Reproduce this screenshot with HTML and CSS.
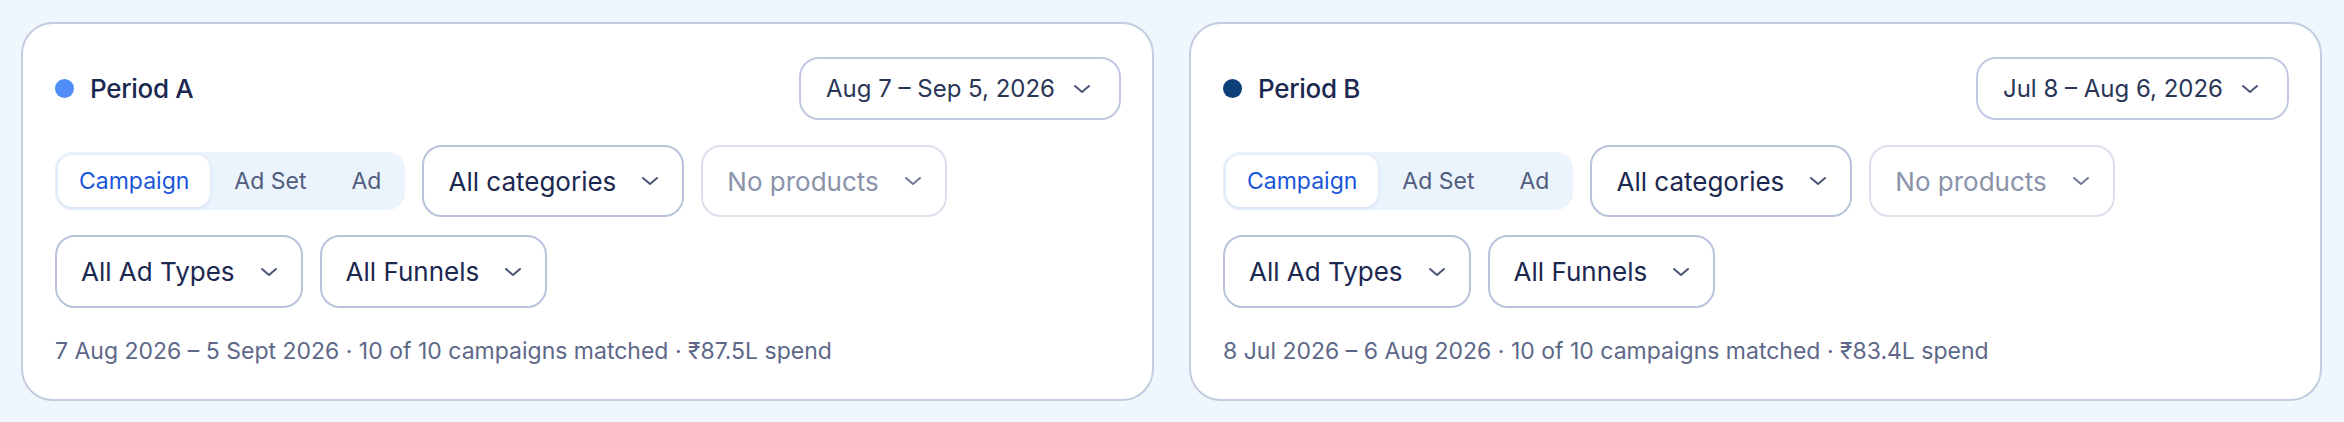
FILE: index.html
```html
<!DOCTYPE html>
<html lang="en">
<head>
<meta charset="utf-8">
<title>Period comparison</title>
<link rel="stylesheet" href="styles.css">
</head>
<body>
<div class="page">
  <section class="card">
    <div class="card-head">
      <div class="title"><span class="dot dot-a"></span><span>Period A</span></div>
      <button class="date-btn">Aug 7 – Sep 5, 2026<svg class="chev" viewBox="0 0 18 10"><path d="M2 2l7 6 7-6"/></svg></button>
    </div>
    <div class="row">
      <div class="seg">
        <span class="seg-item active">Campaign</span>
        <span class="seg-item">Ad Set</span>
        <span class="seg-item">Ad</span>
      </div>
      <button class="select">All categories<svg class="chev" viewBox="0 0 18 10"><path d="M2 2l7 6 7-6"/></svg></button>
      <button class="select disabled">No products<svg class="chev" viewBox="0 0 18 10"><path d="M2 2l7 6 7-6"/></svg></button>
    </div>
    <div class="row">
      <button class="select">All Ad Types<svg class="chev" viewBox="0 0 18 10"><path d="M2 2l7 6 7-6"/></svg></button>
      <button class="select">All Funnels<svg class="chev" viewBox="0 0 18 10"><path d="M2 2l7 6 7-6"/></svg></button>
    </div>
    <p class="summary">7 Aug 2026 – 5 Sept 2026 · 10 of 10 campaigns matched · ₹87.5L spend</p>
  </section>
  <section class="card">
    <div class="card-head">
      <div class="title"><span class="dot dot-b"></span><span>Period B</span></div>
      <button class="date-btn">Jul 8 – Aug 6, 2026<svg class="chev" viewBox="0 0 18 10"><path d="M2 2l7 6 7-6"/></svg></button>
    </div>
    <div class="row">
      <div class="seg">
        <span class="seg-item active">Campaign</span>
        <span class="seg-item">Ad Set</span>
        <span class="seg-item">Ad</span>
      </div>
      <button class="select">All categories<svg class="chev" viewBox="0 0 18 10"><path d="M2 2l7 6 7-6"/></svg></button>
      <button class="select disabled">No products<svg class="chev" viewBox="0 0 18 10"><path d="M2 2l7 6 7-6"/></svg></button>
    </div>
    <div class="row">
      <button class="select">All Ad Types<svg class="chev" viewBox="0 0 18 10"><path d="M2 2l7 6 7-6"/></svg></button>
      <button class="select">All Funnels<svg class="chev" viewBox="0 0 18 10"><path d="M2 2l7 6 7-6"/></svg></button>
    </div>
    <p class="summary">8 Jul 2026 – 6 Aug 2026 · 10 of 10 campaigns matched · ₹83.4L spend</p>
  </section>
</div>
</body>
</html>
```

FILE: styles.css
```css
* { box-sizing: border-box; }
html, body {
  margin: 0;
  padding: 0;
  background: #f0f6fe;
  font-family: Inter, "Noto Sans", "Liberation Sans", sans-serif;
  color: #1b2850;
}
.page {
  display: grid;
  grid-template-columns: 1fr 1fr;
  gap: 35px;
  padding: 22px 22px 21px 21px;
  height: 422px;
}
.card {
  background: #ffffff;
  border: 2px solid #c3cde2;
  border-radius: 32px;
  padding: 33px 31px 0 32px;
  display: flex;
  flex-direction: column;
}
.card-head {
  display: flex;
  justify-content: space-between;
  align-items: center;
  height: 63px;
}
.title {
  display: flex;
  align-items: center;
  gap: 16px;
  font-size: 26px;
  font-weight: 500;
  letter-spacing: -0.3px;
  color: #1b2850;
}
.dot {
  width: 19px;
  height: 19px;
  border-radius: 50%;
  display: inline-block;
}
.dot-a { background: #4f8cf5; }
.dot-b { background: #0d3f78; }
button {
  font-family: inherit;
  background: #ffffff;
  margin: 0;
  cursor: pointer;
}
.chev {
  width: 18px;
  height: 10px;
  fill: none;
  stroke: #4a5577;
  stroke-width: 2;
  stroke-linecap: round;
  stroke-linejoin: round;
  flex: none;
}
.date-btn {
  display: flex;
  align-items: center;
  gap: 18px;
  height: 63px;
  padding: 0 28px 0 25px;
  border: 2px solid #c0c9df;
  border-radius: 20px;
  font-size: 24px;
  color: #2a3656;
}
.row {
  display: flex;
  align-items: center;
  gap: 17px;
  margin-top: 25px;
}
.row + .row { margin-top: 18px; }
.seg {
  display: flex;
  gap: 3px;
  height: 58px;
  padding: 3px;
  background: #ebf3fd;
  border-radius: 17px;
}
.seg-item {
  display: flex;
  align-items: center;
  padding: 0 21px;
  font-size: 23px;
  color: #515d7e;
  border-radius: 14px;
}
.seg-item.active {
  background: #ffffff;
  color: #1a56db;
  box-shadow: 0 1px 4px rgba(30, 60, 120, 0.12);
}
.select {
  display: flex;
  align-items: center;
  gap: 25px;
  height: 72px;
  padding: 0 23px 0 24px;
  border: 2px solid #b9c3dc;
  border-radius: 20px;
  font-size: 26px;
  color: #1b2850;
}
.row + .row .select { height: 73px; }
.select.disabled {
  border-color: #dce1ed;
  color: #8b93a9;
}
.select.disabled .chev { stroke: #6f7893; }
.summary {
  margin: 28px 0 0 0;
  font-size: 23px;
  line-height: 30px;
  color: #5d6888;
}
```
